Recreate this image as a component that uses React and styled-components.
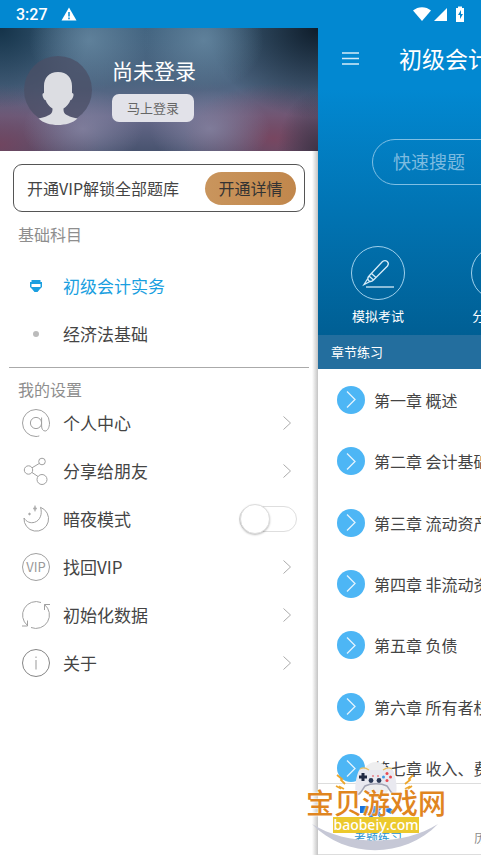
import React from 'react';
import styled, { createGlobalStyle } from 'styled-components';

const subjects = [
  { name: '初级会计实务', active: true },
  { name: '经济法基础', active: false },
];

const chapters = [
  '第一章 概述',
  '第二章 会计基础',
  '第三章 流动资产',
  '第四章 非流动资产',
  '第五章 负债',
  '第六章 所有者权益',
  '第七章 收入、费用和利润',
];

const AtIcon = () => (
  <LineIcon viewBox="0 0 28 28">
    <circle cx="14" cy="14" r="5.6" />
    <path d="M19.6 8.5v8.5c0 3 1.4 5 3.6 5s4.300-3.500 4.300-8A13.500 13.500 0 1 0 14 27.500c1.200 0 2.200-.2 3.300-.6" />
  </LineIcon>
);

const ShareIcon = () => (
  <LineIcon viewBox="0 0 28 28">
    <circle cx="20" cy="4.500" r="3.300" />
    <circle cx="6.500" cy="13" r="4.200" />
    <circle cx="20" cy="22.500" r="5" />
    <path d="M17.200 6.500l-7.200 4.300M10 15.500l6 4" />
  </LineIcon>
);

const MoonIcon = () => (
  <LineIcon viewBox="0 0 28 28">
    <path d="M18.500 2.300A12.300 12.300 0 1 1 2 13c2.500 4 6.500 5.500 10.500 4.300 5.500-1.600 8.200-8.300 6-15z" />
    <path d="M13 0.500l.8 2.200 1.200.8-1.200.8-.8 2.200-.8-2.200-1.200-.8 1.200-.8z" fill="#aaa" strokeWidth="0.400" />
    <circle cx="7.500" cy="9" r="0.800" fill="#aaa" />
  </LineIcon>
);

const VipIcon = () => (
  <LineIcon viewBox="0 0 28 28">
    <circle cx="14" cy="14" r="13.500" />
    <text x="14" y="19" textAnchor="middle" fontSize="13" fill="#999" stroke="none">VIP</text>
  </LineIcon>
);

const ResetIcon = () => (
  <LineIcon viewBox="0 0 28 28">
    <path d="M19 1.500A13.500 13.500 0 0 0 5.500 24.500M9 26.500A13.500 13.500 0 0 0 22.500 3.500" />
    <path d="M5.500 19.500v5.500H0M22.500 9V3.500H28" />
  </LineIcon>
);

const InfoIcon = () => (
  <LineIcon viewBox="0 0 28 28" $dark>
    <circle cx="14" cy="14" r="13.500" />
    <path d="M14 11v9.500M14 7.500v1.500" stroke="#999" />
  </LineIcon>
);

const settings = [
  { name: '个人中心', Icon: AtIcon },
  { name: '分享给朋友', Icon: ShareIcon },
  { name: '暗夜模式', Icon: MoonIcon, toggle: true },
  { name: '找回VIP', Icon: VipIcon },
  { name: '初始化数据', Icon: ResetIcon },
  { name: '关于', Icon: InfoIcon },
];

const App = () => {
  return (
    <Page>
      <GlobalStyle />
      <StatusBar>
        <Clock>3:27</Clock>
        <svg width="16" height="14" viewBox="0 0 16 14">
          <path d="M8 0.500L15.500 13.500H0.500z" fill="#fff" />
          <path d="M8 5v4.500M8 10.500v1.700" stroke="#0288d1" strokeWidth="1.500" />
        </svg>
        <StatusIcons viewBox="0 0 52 16">
          <path d="M0 4.500C5 0 13 0 18 4.500L9 15z" />
          <path d="M34 2v13H21z" />
          <path d="M43 2h2V0.500h4V2h2v14h-8z" />
          <path d="M48 4l-3 5h2v4l3-5h-2z" fill="#0288d1" />
        </StatusIcons>
      </StatusBar>
      <Body>
        <Drawer>
          <Profile>
            <Avatar viewBox="0 0 68 68">
              <circle cx="34" cy="34" r="34" fill="#4b4f66" fillOpacity="0.75" />
              <path
                d="M34 16c-9 0-14 6-14 14v7c-2 0-2 3 0 6 .5 1 1 1 1.500 1 1.500 4 4 6.500 7 8.500 0 5-1 7-14 10C19 67 27 69 34 69s15-2 19.500-6.500c-13-3-14-5-14-10 3-2 5.500-4.500 7-8.500.5 0 1 0 1.500-1 2-3 2-6 0-6v-7c0-8-5-14-14-14z"
                fill="#dcdde2"
              />
            </Avatar>
            <ProfileText>
              <UserName>尚未登录</UserName>
              <LoginButton type="button">马上登录</LoginButton>
            </ProfileText>
          </Profile>
          <VipCard>
            <span>开通VIP解锁全部题库</span>
            <VipButton type="button">开通详情</VipButton>
          </VipCard>
          <GroupTitle>基础科目</GroupTitle>
          <SubjectList>
            {subjects.map((item) => (
              <SubjectRow key={item.name} type="button" $active={item.active}>
                <IconSlot>
                  {item.active ? (
                    <svg width="12" height="12" viewBox="0 0 12 12">
                      <path d="M1.500 0h9v2H12v5l-2 2-2.500 3h-3L2 9 0 7V2h1.500z" fill="#1a9fe0" />
                      <path d="M1.500 4h9v3h-9z" fill="#fff" />
                    </svg>
                  ) : (
                    <Dot />
                  )}
                </IconSlot>
                <RowLabel>{item.name}</RowLabel>
              </SubjectRow>
            ))}
          </SubjectList>
          <Divider />
          <GroupTitle>我的设置</GroupTitle>
          {settings.map(({ name, Icon, toggle }) =>
            toggle ? (
              <SwitchRow key={name}>
                <IconSlot><Icon /></IconSlot>
                <RowLabel>{name}</RowLabel>
                <Switch type="checkbox" role="switch" />
              </SwitchRow>
            ) : (
              <SettingRow key={name} type="button">
                <IconSlot><Icon /></IconSlot>
                <RowLabel>{name}</RowLabel>
                <Chevron viewBox="0 0 8 14"><path d="M0.500 0.500L7.500 7l-7 6.500" /></Chevron>
              </SettingRow>
            )
          )}
        </Drawer>
        <Main>
          <Hero>
            <TopBar>
              <MenuButton type="button" aria-label="菜单">
                <svg width="17" height="13" viewBox="0 0 17 13" stroke="#d5ebf8" strokeWidth="1.500">
                  <path d="M0 1h17M0 6.500h17M0 12h17" />
                </svg>
              </MenuButton>
              <Title>初级会计实务</Title>
            </TopBar>
            <Search type="text" placeholder="快速搜题" aria-label="快速搜题" />
            <Actions>
              <Action type="button">
                <Ring>
                  <svg width="32" height="30" viewBox="0 0 32 30" fill="none" stroke="#d5ebf8" strokeWidth="1.300">
                    <path d="M7 18L20.500 3.500c3.500-2.500 7.500 1 5 4.500L11.500 22M7 18c-1.500 1.500-1.500 3-.5 4.500 1.500 1.500 3.500 1 5-.5M7 18l4.500 4M9.500 15.500l4.500 4M5.500 21l-3.500 5.500 6-3" />
                    <path d="M4 29h28" />
                  </svg>
                </Ring>
                模拟考试
              </Action>
              <Action type="button">
                <Ring />
                分类练习
              </Action>
            </Actions>
          </Hero>
          <SectionBar>章节练习</SectionBar>
          <ChapterArea>
            <ChapterList>
              {chapters.map((name) => (
                <Chapter key={name}>
                  <Bullet>
                    <svg width="10" height="17" viewBox="0 0 10 17" fill="none" stroke="#e4f4fe" strokeWidth="1.300">
                      <path d="M1 0.500l8 8-8 8" />
                    </svg>
                  </Bullet>
                  {name}
                </Chapter>
              ))}
            </ChapterList>
          </ChapterArea>
          <TabBar>
            <Tab href="#practice" $active>
              <svg width="36" height="22" viewBox="0 0 36 22" fill="#1672dc">
                <path d="M0 8h8v7H0zM12 8h12l-5 5 5 7h-4l-4-5-4 5H8l5-7zM25 7l10 6-4 3-6-3z" />
              </svg>
              考题练习
            </Tab>
            <Tab href="#history">历年真题</Tab>
          </TabBar>
        </Main>
      </Body>
      <Watermark>
        <Gamepad viewBox="0 0 140 94">
          <path d="M6 63C40 98 98 98 132 63C98 85 40 85 6 63z" fill="#c6c8d6" />
          <ellipse cx="70" cy="19" rx="15" ry="18" fill="#eeeeef" />
          <path d="M54 8c3-2 7-1 10 1h12c3-2 7-3 10-1 3 3 6 18 4 25-4 2-6-4-9-8-6-3-16-3-22 0-3 4-5 10-9 8-2-7 1-22 4-25z" fill="#e9e9f0" />
          <path d="M50 33c4 2 6-4 9-8 6-3 16-3 22 0 3 4 5 10 9 8" fill="none" stroke="#a3a5b5" strokeWidth="1.500" />
          <path d="M54 8c3-2 6-1 9 1M77 9c3-2 6-3 9-1" fill="none" stroke="#ecc05e" strokeWidth="1.300" />
          <path d="M57 12v8M53 16h8" stroke="#222b43" strokeWidth="3" />
          <circle cx="65" cy="19.500" r="2.400" fill="#2b3957" />
          <circle cx="73" cy="19.500" r="2.400" fill="#2b3957" />
          <path d="M66 15h2M71 15h2" stroke="#e84a52" />
          <circle cx="81" cy="12.500" r="1.500" fill="#e84a52" />
          <circle cx="81" cy="19.500" r="1.500" fill="#e84a52" />
          <circle cx="77.500" cy="16" r="1.500" fill="#419be5" />
          <circle cx="84.500" cy="16" r="1.500" fill="#e84a52" />
          <path d="M31 14l5 4-1 1 4 4M30 25l4 2v-1l4 2M107 14l-4 4 1 1-5 4M106 25l-3 2v-1l-4 2" fill="none" stroke="#eda62c" strokeWidth="1.800" />
        </Gamepad>
        <WatermarkName>宝贝游戏网</WatermarkName>
        <WatermarkSite>baobeiy.com</WatermarkSite>
      </Watermark>
    </Page>
  );
};

const GlobalStyle = createGlobalStyle`
  *{
    box-sizing:border-box;
  }
  body{
    margin:0;
    font-family:"Noto Sans CJK SC", sans-serif;
    color:#444;
    background:#fff;
  }
  button, input{
    font-family:inherit;
    margin:0;
  }
`;

const Page = styled.div`
  display:flex;
  flex-direction:column;
  height:100vh;
  overflow:hidden;
  position:relative;
`;

const StatusBar = styled.header`
  display:flex;
  align-items:center;
  gap:13px;
  flex:none;
  height:28px;
  padding:0 16px;
  background:#0288d1;
`;

const Clock = styled.span`
  font-family:Roboto, sans-serif;
  font-size:16px;
  font-weight:500;
  color:#fff;
`;

const StatusIcons = styled.svg`
  width:52px;
  height:16px;
  margin-left:auto;
  fill:#fff;
`;

const Body = styled.div`
  display:flex;
  flex:1;
  min-height:0;
`;

const Drawer = styled.aside`
  display:flex;
  flex-direction:column;
  flex:none;
  width:66.1%;
  background:linear-gradient(to left, #c4c4c4, #fff 6px);
`;

const Profile = styled.section`
  display:flex;
  align-items:center;
  gap:20px;
  flex:none;
  height:123px;
  padding:0 24px;
  background:
    radial-gradient(ellipse 60px 50px at 28% 10%, rgba(104,138,163,.75), transparent),
    radial-gradient(ellipse 60px 50px at 64% 10%, rgba(104,138,163,.75), transparent),
    radial-gradient(ellipse 60px 40px at 26% 82%, rgba(134,132,162,.8), transparent),
    radial-gradient(ellipse 60px 40px at 66% 82%, rgba(134,132,162,.8), transparent),
    radial-gradient(ellipse 90px 80px at 0 0, rgba(18,48,70,.95), transparent),
    radial-gradient(ellipse 110px 90px at 100% 0, rgba(14,28,42,1), transparent),
    radial-gradient(ellipse 40px 60px at 100% 100%, rgba(60,48,66,.9), transparent),
    radial-gradient(ellipse 100px 60px at 0 95%, rgba(118,66,92,.85), transparent),
    radial-gradient(ellipse 90px 55px at 86% 90%, rgba(124,68,94,.9), transparent),
    linear-gradient(#426480, #4d6581 45%, #67698a 72%, #48536f);
`;

const Avatar = styled.svg`
  flex:none;
  width:68px;
  height:68px;
  overflow:visible;
`;

const ProfileText = styled.div`
  display:flex;
  flex-direction:column;
  align-items:flex-start;
  gap:9px;
  padding-bottom:3px;
`;

const UserName = styled.span`
  font-size:21px;
  line-height:30px;
  color:#fff;
`;

const LoginButton = styled.button`
  width:82px;
  height:28px;
  padding:0;
  border:0;
  border-radius:7px;
  font-size:13px;
  color:#666;
  background:#e2e2e9;
`;

const VipCard = styled.section`
  display:flex;
  align-items:center;
  justify-content:space-between;
  flex:none;
  height:48px;
  margin:13px 13px 12px;
  padding:0 8px 0 13px;
  border:1px solid #555;
  border-radius:9px;
  font-size:16px;
`;

const VipButton = styled.button`
  width:91px;
  height:33px;
  padding:0;
  border:0;
  border-radius:17px;
  font-size:16px;
  color:#333;
  background:linear-gradient(to right, #c9955d, #c1874c);
`;

const GroupTitle = styled.h2`
  margin:0;
  padding-left:18px;
  font-size:16px;
  font-weight:400;
  line-height:20px;
  color:#8e8e8e;
`;

const SubjectList = styled.div`
  display:flex;
  flex-direction:column;
  padding:18px 0 9px;
`;

const SubjectRow = styled.button`
  display:flex;
  align-items:center;
  height:48px;
  padding:0 22px;
  border:0;
  background:none;
  font-size:17px;
  color:${(props) => (props.$active ? '#1a9fe0' : '#444')};
`;

const SettingRow = styled.button`
  display:flex;
  align-items:center;
  flex:none;
  height:48px;
  padding:0 27px 0 22px;
  border:0;
  background:none;
  font-size:17px;
  color:#444;
`;

const SwitchRow = styled.label`
  display:flex;
  align-items:center;
  flex:none;
  height:48px;
  padding:0 21px 0 22px;
  font-size:17px;
  color:#444;
`;

const IconSlot = styled.span`
  display:flex;
  align-items:center;
  justify-content:center;
  width:28px;
  margin-right:13px;
`;

const RowLabel = styled.span`
  flex:1;
  padding-bottom:2px;
  text-align:left;
`;

const LineIcon = styled.svg`
  width:28px;
  height:28px;
  fill:none;
  stroke:${(props) => (props.$dark ? '#858585' : '#a0a0a0')};
  stroke-width:1;
`;

const Dot = styled.span`
  width:6px;
  height:6px;
  border-radius:50%;
  background:#bbb;
`;

const Divider = styled.hr`
  width:auto;
  height:1px;
  margin:0 9px 11px;
  border:0;
  background:#aaa;
`;

const Chevron = styled.svg`
  width:8px;
  height:14px;
  fill:none;
  stroke:#aaa;
`;

const Switch = styled.input`
  appearance:none;
  display:flex;
  align-items:center;
  width:58px;
  height:26px;
  border:1px solid #dedede;
  border-radius:13px;
  background:#fff;
  &::before{
    content:"";
    width:28px;
    height:28px;
    border-radius:50%;
    background:#fff;
    border:1px solid #ddd;
    box-shadow:0 1px 2px rgba(0,0,0,.25);
  }
  &:checked{
    justify-content:flex-end;
    background:#4db6f5;
  }
`;

const Main = styled.main`
  display:flex;
  flex-direction:column;
  flex:1;
  min-width:0;
  overflow:hidden;
`;

const Hero = styled.section`
  display:flex;
  flex-direction:column;
  flex:none;
  width:100vw;
  height:307px;
  background:linear-gradient(#0288d1 20%, #005f94);
`;

const TopBar = styled.div`
  display:flex;
  align-items:center;
  gap:32px;
  height:60px;
  padding-left:16px;
`;

const MenuButton = styled.button`
  display:flex;
  padding:8px;
  border:0;
  background:none;
`;

const Title = styled.h1`
  margin:0;
  font-size:23px;
  font-weight:400;
  color:#fff;
`;

const Search = styled.input`
  height:46px;
  margin:51px 54px 0;
  padding:0 20px 3px;
  border:1px solid #7fbfe4;
  border-radius:23px;
  background:none;
  font-size:18px;
  color:#fff;
  &::placeholder{
    color:#7dbbe0;
    opacity:1;
  }
`;

const Actions = styled.nav`
  display:grid;
  grid-template-columns:repeat(4, 1fr);
  margin-top:61px;
`;

const Action = styled.button`
  display:flex;
  flex-direction:column;
  align-items:center;
  gap:6px;
  padding:0;
  border:0;
  background:none;
  font-size:13px;
  line-height:20px;
  color:#fff;
`;

const Ring = styled.span`
  display:flex;
  align-items:center;
  justify-content:center;
  width:54px;
  height:54px;
  border:1px solid #9fd0ec;
  border-radius:50%;
`;

const SectionBar = styled.h2`
  flex:none;
  margin:0;
  padding-left:13px;
  font-size:13px;
  font-weight:400;
  line-height:34px;
  color:#fff;
  background:#236e9e;
`;

const ChapterArea = styled.div`
  flex:1;
  min-height:0;
  overflow:hidden;
`;

const ChapterList = styled.ul`
  display:grid;
  grid-auto-rows:1fr;
  height:430px;
  margin:0;
  padding:0;
  list-style:none;
`;

const Chapter = styled.li`
  display:flex;
  align-items:center;
  gap:9px;
  padding-left:19px;
  font-size:16px;
  white-space:nowrap;
`;

const Bullet = styled.span`
  display:flex;
  align-items:center;
  justify-content:center;
  flex:none;
  width:28px;
  height:28px;
  border-radius:50%;
  background:#4db6f5;
`;

const TabBar = styled.nav`
  display:grid;
  grid-template-columns:repeat(4, 1fr);
  flex:none;
  width:100vw;
  height:72px;
  border-top:1px solid #ddd;
  border-bottom:1px solid #ddd;
  background:#fff;
`;

const Tab = styled.a`
  display:flex;
  flex-direction:column;
  align-items:center;
  justify-content:flex-end;
  gap:8px;
  padding-bottom:6px;
  font-size:12px;
  line-height:20px;
  text-decoration:none;
  color:${(props) => (props.$active ? '#2a93cf' : '#8a8a8a')};
`;

const Watermark = styled.div`
  position:absolute;
  right:35px;
  bottom:0;
  display:flex;
  flex-direction:column;
  align-items:center;
  width:140px;
  height:94px;
  padding-top:26px;
  pointer-events:none;
`;

const Gamepad = styled.svg`
  position:absolute;
  top:0;
  left:0;
  width:140px;
  height:94px;
`;

const WatermarkName = styled.strong`
  position:relative;
  font-size:28px;
  font-weight:500;
  line-height:30px;
  white-space:nowrap;
  color:#e0851f;
  text-shadow:0 0 2px #fff, 0 0 2px #fff;
`;

const WatermarkSite = styled.span`
  position:relative;
  width:86px;
  font-family:"Noto Sans", sans-serif;
  font-size:14px;
  font-weight:500;
  line-height:16px;
  text-align:center;
  color:#fff;
  background:#ecc92d;
`;

export default App;
